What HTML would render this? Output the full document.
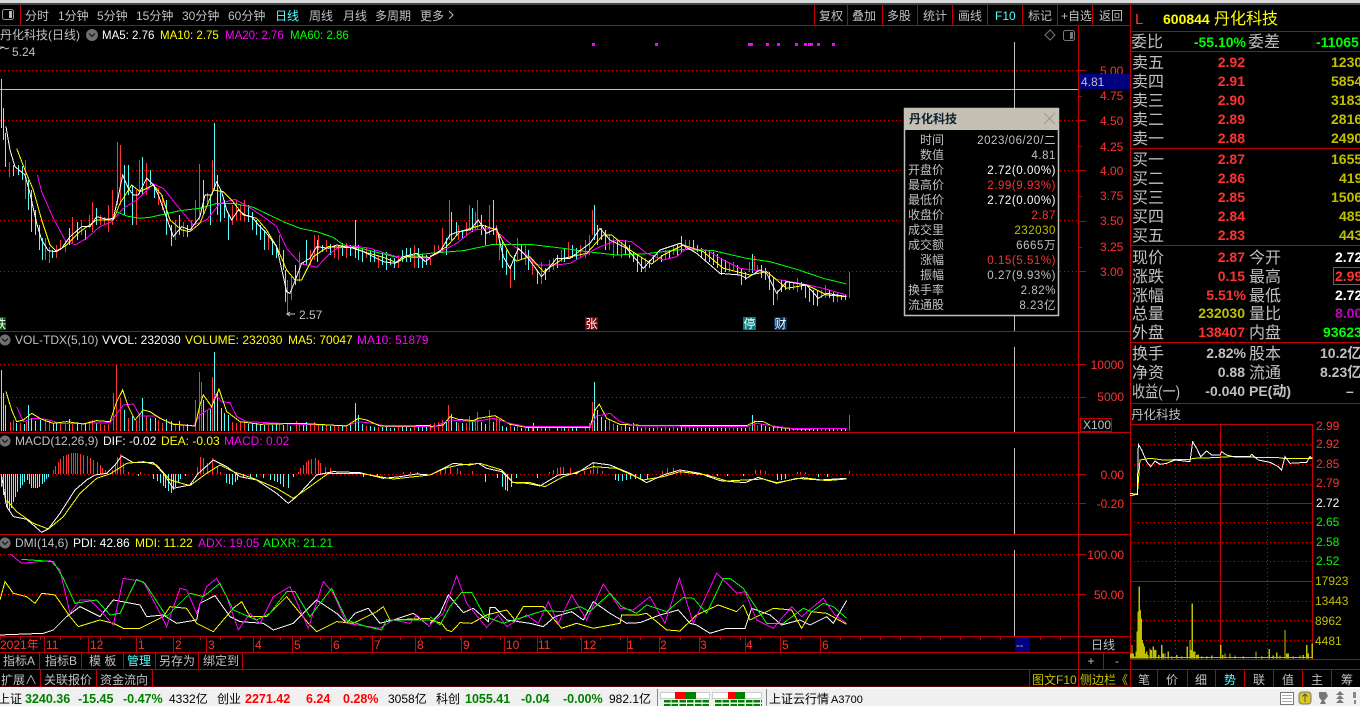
<!DOCTYPE html>
<html lang="zh"><head><meta charset="utf-8"><title>丹化科技</title>
<style>
html,body{margin:0;padding:0;background:#000;width:1360px;height:706px;overflow:hidden}
svg{display:block}
text{font-family:"Liberation Sans","WenQuanYi Zen Hei","Noto Sans CJK SC",sans-serif;font-size:12px;fill:#c0c0c0}
.y{fill:#ffff00}.w{fill:#fff}.m{fill:#ff00ff}.gr{fill:#00ff00}.c{fill:#54ffff}.r{fill:#ff3232}.dy{fill:#c0c000}
.b{font-size:16px}
.n{font-size:14px;font-weight:bold}
.p{font-size:11.5px;letter-spacing:.55px}
.k{fill:#000;font-size:12px}
.sb{font-size:12.5px;font-weight:bold}
.e{text-anchor:end}
polyline{fill:none;stroke-width:3}
.ln{shape-rendering:crispEdges}
</style></head><body>
<svg width="1360" height="706" viewBox="0 0 1360 706" xmlns="http://www.w3.org/2000/svg">
<rect width="1360" height="706" fill="#000"/>
<rect width="1360" height="4" fill="#d8d8d8"/>
<rect x="0" y="3" width="1360" height="2" fill="#444"/>

<!-- dotted grid -->
<g stroke="#e00000" stroke-dasharray="1 3" shape-rendering="crispEdges" fill="none">
<path d="M0 70.5H1078M0 120.5H1078M0 170.5H1078M0 220.5H1078M0 271.5H1078M0 364.5H1078M0 397.5H1078M0 474.5H1078M0 503.5H1078M0 594.5H1078M0 554.5H1078"/>
<path d="M1130 444.5H1312M1130 464.5H1312M1130 484.5H1312M1130 522.5H1312M1130 542.5H1312M1130 561.5H1312M1130 601.5H1312M1130 620.5H1312M1130 640.5H1312M1175.5 424V659M1267.5 424V659"/>
</g>

<!-- panel lines -->
<g stroke="#c00000" fill="none" shape-rendering="crispEdges">
<path d="M0 25.5H1130M20.5 5V25M814.5 5V25M847.5 5V25M882.5 5V25M917.5 5V25M952.5 5V25M987.5 5V25M1022.5 5V25M1057.5 5V25M1092.5 5V25"/>
<path d="M0 331.5H1130M0 432.5H1130M0 534.5H1130M0 636.5H1130M0 652.5H1130M0 669.5H1130M0 687H1130M1078.5 25V669M1103.5 652V669M1029.5 669V687M1078.5 669V687M1130.5 4V687"/>
<path d="M39.5 652V669M81.5 652V669M123.5 652V669M155.5 652V669M198.5 652V669M242.5 652V669M40.5 669V687M96.5 669V687M152.5 669V687"/>
<path d="M44.5 637V652M88.5 637V652M136.5 637V652M173.5 637V652M206.5 637V652M253.5 637V652M292.5 637V652M331.5 637V652M372.5 637V652M415.5 637V652M461.5 637V652M504.5 637V652M537.5 637V652M581.5 637V652M627.5 637V652M659.5 637V652M699.5 637V652M745.5 637V652M780.5 637V652M820.5 637V652"/>
<path d="M1130 31.5H1360M1130 51.5H1360M1130 148.5H1360M1130 245.5H1360M1130 342.5H1360M1130 403.5H1360M1130 424.5H1312M1130 503.5H1312M1130 581.5H1312M1312.5 424V659M1130 659.5H1360M1220.5 424V659M1130 669.5H1360M1157.5 669V687M1187.5 669V687M1215.5 669V687M1244.5 669V687M1273.5 669V687M1302.5 669V687M1331.5 669V687"/>
<path d="M1079 70.5H1086M1079 96.5H1082M1079 120.5H1086M1079 146.5H1082M1079 170.5H1086M1079 196.5H1082M1079 221.5H1086M1079 247.5H1082M1079 271.5H1086M1079 364.5H1086M1079 397.5H1086M1079 474.5H1086M1079 503.5H1086M1079 554.5H1086M1079 594.5H1086"/>
<path d="M0 638.5H1078" stroke-width="3" stroke-dasharray="1 19"/>
</g>

<!-- toolbar -->
<rect x="2.5" y="9.5" width="11" height="10" rx="2" fill="none" stroke="#999"/>
<rect x="9" y="11" width="3" height="7" fill="#bbb"/>
<text x="25" y="20">分时</text><text x="58" y="20">1分钟</text><text x="97" y="20">5分钟</text><text x="136" y="20">15分钟</text><text x="182" y="20">30分钟</text><text x="228" y="20">60分钟</text><text x="275" y="20" class="c">日线</text><text x="309" y="20">周线</text><text x="343" y="20">月线</text><text x="375" y="20">多周期</text><text x="420" y="20">更多</text>
<path d="M449 11l4 4-4 4" stroke="#c0c0c0" fill="none"/>
<text x="819" y="20">复权</text><text x="852" y="20">叠加</text><text x="887" y="20">多股</text><text x="923" y="20">统计</text><text x="958" y="20">画线</text><text x="995" y="20" class="c">F10</text><text x="1028" y="20">标记</text><text x="1061" y="20">+自选</text><text x="1099" y="20">返回</text>

<!-- main header -->
<text x="0" y="39">丹化科技(日线)</text>
<circle cx="92" cy="35" r="6" fill="#707070"/><path d="M89 33.5l3 3 3-3" stroke="#111" fill="none" stroke-width="1.2"/>
<text x="102" y="39" class="w" style="font-size:11.5px">MA5: 2.76</text><text x="160" y="39" class="y" style="font-size:11.5px">MA10: 2.75</text><text x="225" y="39" class="m" style="font-size:11.5px">MA20: 2.76</text><text x="290" y="39" class="gr" style="font-size:11.5px">MA60: 2.86</text>
<path d="M0 47h2M0 49l3-2 3 2 3-1" stroke="#c0c0c0" fill="none"/>
<text x="12" y="56">5.24</text>
<path d="M1050 30l5 5-5 5-5-5z" fill="none" stroke="#777"/>
<rect x="1063.5" y="30.5" width="11" height="10" rx="2" fill="none" stroke="#777"/><rect x="1070" y="32" width="3" height="7" fill="#777"/>
<path d="M592 43h3v3h-3zM655 43h3v3h-3zM748 43h5v3h-5zM766 43h3v3h-3zM777 43h3v3h-3zM795 43h3v3h-3zM804 43h3v3h-3zM808 43h5v3h-5zM817 43h3v3h-3zM832 43h3v3h-3z" fill="#ff00ff" class="ln"/>

<!-- candles -->
<path class="ln" transform="translate(.5 0)" fill="none" stroke="#ff3232" d="M9 162V177M25 160V199M45 238V260M49 247V263M56 245V258M60 240V250M65 240V252M72 217V243M81 220V235M89 215V228M92 202V232M100 215V225M104 217V225M108 205V232M112 190V225M117 142V205M120 145V205M136 190V225M139 160V195M146 163V195M158 188V205M162 195V210M175 220V240M183 222V237M191 220V230M195 200V225M199 164V220M207 193V205M212 160V190M232 205V225M236 200V220M240 205V220M244 200V222M268 235V250M279 235V255M287 280V315M291 277V300M299 252V282M310 250V265M314 235V260M318 235V250M326 240V252M334 245V258M338 245V260M346 243V258M366 247V258M378 255V268M398 255V268M414 245V268M430 255V265M434 245V255M438 245V250M442 228V253M449 200V240M458 225V240M466 222V235M469 205V230M475 212V230M477 200V230M489 205V235M496 225V245M499 235V260M510 265V288M517 238V260M525 245V265M532 260V275M541 262V284M549 260V272M553 258V270M561 250V262M568 242V258M580 245V258M585 240V258M589 235V255M592 210V235M609 235V250M613 238V258M621 243V258M645 258V272M657 252V258M665 250V260M673 245V255M685 240V250M689 240V248M729 262V272M733 262V270M749 262V272M754 256V270M757 265V272M777 290V300M793 282V290M797 278V292M821 290V298M825 285V298M837 292V302M849 272V298"/>
<path class="ln" transform="translate(.5 0)" fill="none" stroke="#54ffff" d="M1 79V128M3 108V140M5 133V167M13 165V176M18 165V175M22 166V180M28 180V210M31 190V232M35 210V235M39 225V250M42 238V260M52 250V258M69 228V245M77 222V240M85 230V240M96 208V225M124 165V215M128 165V195M132 185V225M142 157V195M150 170V185M154 185V198M166 200V235M171 225V246M179 215V235M187 225V237M203 180V215M210 195V225M214 123V190M217 175V215M220 190V222M224 200V218M228 215V240M248 205V222M252 212V230M256 220V235M260 225V240M264 230V250M272 240V255M276 245V258M283 250V270M285 270V302M295 265V285M303 262V265M306 240V265M317 240V262M322 245V252M330 244V255M342 243V256M350 245V256M355 220V258M358 245V260M362 248V262M370 250V262M374 250V262M382 252V265M386 252V270M390 258V265M394 258V268M402 250V262M406 248V262M410 248V262M418 248V268M422 254V268M426 255V265M446 238V255M451 212V240M456 222V236M462 230V238M472 208V232M481 215V235M485 225V245M493 200V235M502 240V268M506 250V275M514 255V280M521 245V260M528 250V270M537 270V284M545 268V280M557 255V268M564 248V262M572 245V258M576 248V260M594 205V240M597 225V245M601 228V240M605 230V250M617 240V255M625 240V255M629 245V258M633 252V262M637 255V272M641 258V272M649 260V268M653 255V262M661 255V262M669 250V258M677 245V256M681 236V252M693 240V250M697 245V252M701 248V258M705 250V260M709 250V262M713 252V265M717 254V268M721 258V275M725 260V272M737 265V275M741 268V285M745 272V280M752 254V273M761 265V278M765 268V280M769 272V290M773 277V305M781 280V292M785 280V290M789 281V290M801 282V290M805 285V298M809 288V302M813 290V305M817 290V306M829 290V298M833 292V302M841 295V300M845 295V300"/>
<!-- price MA lines zoom coords -->
<g transform="translate(0 120) scale(.3333)" class="ln">
<polyline stroke="#00ff00" points="350,275 380,288 420,295 450,292 540,272 600,265 650,250 700,250 760,262 850,305 900,325 950,335 1000,352 1030,375 1070,382 1150,402 1190,412 1290,400"/>
<polyline stroke="#ff00ff" points="112,165 125,215 160,295 195,360 225,375 260,355 300,320 335,305 370,265 410,240 460,192 490,205 530,255 580,315 620,300 660,250 705,238 745,260 790,290 830,320 860,385 900,430 950,442 985,405 1010,385 1060,378 1110,385 1190,410 1290,415"/>
<polyline stroke="#ffff00" points="50,85 75,150 100,210 125,300 150,375 170,395 200,375 240,335 290,300 340,300 360,250 395,195 420,215 460,195 485,225 510,300 545,330 570,335 600,310 640,210 670,215 695,240 730,285 770,295 800,330 830,380 860,450 885,480 905,480 940,410 985,380 1060,383 1100,398 1150,412 1190,428 1220,410 1290,412"/>
<polyline stroke="#ffffff" points="18,20 30,90 45,140 75,165 90,220 110,310 125,360 145,392 165,395 185,385 210,350 245,320 270,320 290,290 320,298 340,295 355,230 368,165 385,205 400,225 415,225 440,175 460,195 475,225 495,280 520,350 545,320 570,330 600,290 615,225 635,225 650,185 665,215 680,270 695,300 715,270 735,285 755,290 780,320 800,340 830,380 860,515 870,520 890,470 905,430 930,415 950,380 985,385 1010,375 1060,385 1090,395 1130,415 1150,425 1185,430 1210,410 1250,400 1275,425 1290,415"/>
</g>
<g transform="translate(430 180) scale(.3333)" class="ln">
<polyline stroke="#00ff00" points="0,220 100,212 190,193 300,193 400,205 470,215 560,225 640,222 760,208 850,212 950,235 1020,245 1100,268 1180,295 1250,312"/>
<polyline stroke="#ff00ff" points="0,232 80,190 130,150 190,145 240,190 290,225 320,255 380,255 420,250 500,205 560,180 605,185 650,220 700,240 740,230 770,205 830,210 880,240 930,265 1010,275 1040,298 1120,312 1180,325 1250,345"/>
<polyline stroke="#ffff00" points="0,230 50,200 90,155 155,135 200,150 240,225 260,243 300,230 340,275 400,235 470,220 520,165 545,165 600,210 665,252 700,225 760,195 820,215 880,265 960,285 1010,275 1070,325 1130,315 1190,345 1250,350"/>
<polyline stroke="#ffffff" points="0,230 30,215 60,165 85,155 120,150 145,120 170,160 200,145 220,230 240,265 265,205 295,235 335,290 380,235 420,235 480,190 510,145 540,180 590,205 640,265 690,210 750,190 800,220 870,280 930,285 950,295 990,270 1010,280 1040,340 1070,305 1130,315 1165,355 1190,340 1250,350"/>
</g>
<path d="M295 314H287l3-2M287 314l3 2" stroke="#c0c0c0" fill="none"/>
<text x="299" y="319">2.57</text>

<!-- signal tags -->
<rect x="0" y="317" width="6" height="13" fill="#006000"/><text x="-6" y="328" class="w">跌</text>
<rect x="585" y="317" width="13" height="13" fill="#800000"/><text x="585.5" y="328" class="w">张</text>
<rect x="743" y="317" width="13" height="13" fill="#008080"/><text x="743.5" y="328" class="w">停</text>
<rect x="774" y="317" width="13" height="13" fill="#003060"/><text x="774.5" y="328" class="w">财</text>

<!-- crosshair -->
<path class="ln" fill="none" stroke="#c0c0c0" d="M0 89.5H1078M1014.5 42V108M1014.5 316V331M1014.5 347V432M1014.5 448V534M1014.5 550V636"/>

<!-- axis labels -->
<g>
<text x="1100" y="75" class="r">5.00</text><text x="1100" y="100" class="r">4.75</text><text x="1100" y="125" class="r">4.50</text><text x="1100" y="151" class="r">4.25</text><text x="1100" y="175" class="r">4.00</text><text x="1100" y="200" class="r">3.75</text><text x="1100" y="225" class="r">3.50</text><text x="1100" y="251" class="r">3.25</text><text x="1100" y="276" class="r">3.00</text>
<text x="1124" y="369" class="r e">10000</text><text x="1124" y="401" class="r e">5000</text>
<text x="1124" y="479" class="r e">0.00</text><text x="1124" y="508" class="r e">-0.20</text>
<text x="1124" y="559" class="r e">100.00</text><text x="1124" y="599" class="r e">50.00</text>
</g>
<rect x="1079" y="74" width="51" height="15" fill="#000080"/><text x="1081" y="86">4.81</text>
<rect x="1080.5" y="418.5" width="31" height="13" fill="none" stroke="#c00000"/><text x="1083" y="429">X100</text>

<!-- volume pane -->
<circle cx="5" cy="340" r="5.5" fill="#707070"/><path d="M2 338.5l3 3 3-3" stroke="#111" fill="none"/>
<text x="15" y="344">VOL-TDX(5,10)</text><text x="102" y="344" class="w">VVOL: 232030</text><text x="185" y="344" class="y">VOLUME: 232030</text><text x="288" y="344" class="y">MA5: 70047</text><text x="357" y="344" class="m">MA10: 51879</text>
<path class="ln" transform="translate(.5 0)" fill="none" stroke="#ff3232" d="M10 431V422M13 431V420M20 431V423M26 431V422M45 431V420M49 431V421M60 431V423M65 431V424M72 431V423M81 431V424M89 431V421M92 431V420M100 431V424M104 431V425M108 431V424M113 431V393M116 431V365M120 431V398M128 431V418M136 431V420M139 431V415M146 431V416M158 431V420M162 431V423M175 431V424M183 431V425M195 431V400M199 431V372M201 431V382M207 431V410M212 431V377M232 431V422M236 431V423M240 431V422M244 431V421M268 431V425M279 431V424M287 431V424M296 431V421M299 431V424M310 431V424M314 431V422M318 431V424M326 431V425M334 431V426M338 431V425M346 431V425M366 431V426M378 431V427M398 431V427M414 431V426M430 431V424M434 431V423M438 431V422M442 431V420M448 431V405M458 431V423M466 431V423M469 431V416M475 431V420M477 431V412M489 431V410M496 431V417M499 431V419M510 431V424M517 431V424M525 431V426M532 431V427M541 431V427M549 431V427M561 431V428M568 431V427M585 431V426M589 431V423M592 431V402M609 431V420M613 431V424M621 431V426M645 431V427M657 431V427M665 431V427M673 431V427M685 431V427M689 431V426M729 431V428M733 431V428M749 431V427M754 431V420M757 431V425M777 431V427M793 431V428M797 431V428M821 431V429M825 431V429M837 431V429M849 431V415"/>
<path class="ln" transform="translate(.5 0)" fill="none" stroke="#54ffff" d="M1 431V370M3 431V393M5 431V405M16 431V423M24 431V424M28 431V405M31 431V418M35 431V421M40 431V420M53 431V424M56 431V422M69 431V419M77 431V422M85 431V424M96 431V423M124 431V410M132 431V416M142 431V398M150 431V418M155 431V418M166 431V419M171 431V421M179 431V421M187 431V424M203 431V400M210 431V409M214 431V352M217 431V393M221 431V408M224 431V413M228 431V415M248 431V424M252 431V424M256 431V423M260 431V424M264 431V425M272 431V425M276 431V424M283 431V425M290 431V426M303 431V425M306 431V422M322 431V425M330 431V426M342 431V426M350 431V425M355 431V403M358 431V415M362 431V424M370 431V426M374 431V427M382 431V427M386 431V427M390 431V428M394 431V428M402 431V427M406 431V427M410 431V428M418 431V427M422 431V427M426 431V427M446 431V420M451 431V414M456 431V422M462 431V423M472 431V421M481 431V422M485 431V424M493 431V422M502 431V426M506 431V427M514 431V427M521 431V428M528 431V427M533 431V423M537 431V428M545 431V428M557 431V428M564 431V428M572 431V428M576 431V428M594 431V382M597 431V410M601 431V417M605 431V420M617 431V425M625 431V424M629 431V427M633 431V423M637 431V427M641 431V428M649 431V428M653 431V428M661 431V428M669 431V428M677 431V428M681 431V427M693 431V428M697 431V428M701 431V428M705 431V428M709 431V428M713 431V428M717 431V428M721 431V428M725 431V428M737 431V428M741 431V428M745 431V428M752 431V415M761 431V424M765 431V426M769 431V427M773 431V427M781 431V428M785 431V428M789 431V428M801 431V429M805 431V429M809 431V429M813 431V429M817 431V429M829 431V429M833 431V429M841 431V429M845 431V429"/>
<g transform="translate(0 330) scale(.3333)" class="ln">
<polyline stroke="#ff00ff" points="50,230 70,275 100,265 140,268 180,280 250,280 330,278 370,225 400,222 420,258 470,258 510,280 580,288 600,255 635,232 645,192 665,215 690,218 710,260 740,275 900,283 1040,287 1075,275 1130,282 1160,290 1290,290"/>
<polyline stroke="#ffff00" points="18,185 35,240 50,275 70,270 95,250 125,268 160,280 200,275 250,282 290,272 330,275 350,215 368,180 385,230 405,270 430,240 450,245 480,265 520,283 585,288 600,225 610,195 635,230 657,177 680,245 720,275 780,283 900,280 1040,288 1075,265 1100,270 1140,288 1290,287"/>
</g>
<g transform="translate(430 330) scale(.3333)" class="ln">
<polyline stroke="#ffff00" points="0,290 40,285 60,260 85,268 130,272 145,265 195,257 240,283 290,292 480,292 495,240 508,223 530,265 570,283 650,287 950,287 975,275 1000,275 1030,290 1090,297 1250,295"/>
<polyline stroke="#ff00ff" points="0,295 60,270 130,275 190,265 240,280 290,290 480,290 500,258 540,250 570,275 620,288 950,290 980,280 1030,288 1090,296 1250,296"/>
</g>

<!-- MACD pane -->
<circle cx="5" cy="441" r="5.5" fill="#707070"/><path d="M2 439.5l3 3 3-3" stroke="#111" fill="none"/>
<text x="15" y="445">MACD(12,26,9)</text><text x="103" y="445" class="w">DIF: -0.02</text><text x="161" y="445" class="y">DEA: -0.03</text><text x="224" y="445" class="m">MACD: 0.02</text>
<path class="ln" transform="translate(.5 0)" fill="none" stroke="#54ffff" d="M1 474V487M3 474V495M5 474V503M7 474V508M9 474V511M11 474V508M13 474V502M15 474V497M17 474V492M20 474V488M22 474V485M24 474V482M27 474V480M29 474V484M31 474V488M33 474V488M35 474V488M37 474V488M39 474V487M42 474V484M44 474V482M46 474V479M48 474V477M138 474V476M153 474V479M157 474V481M160 474V483M163 474V486M165 474V488M168 474V491M171 474V493M173 474V490M175 474V487M178 474V482M180 474V479M185 474V476M226 474V483M229 474V484M232 474V485M235 474V482M237 474V480M243 474V477M250 474V477M256 474V477M263 474V478M270 474V480M274 474V481M277 474V482M280 474V484M283 474V487M288 474V488M293 474V477M363 474V477M370 474V476M377 474V477M485 474V482M497 474V478M502 474V487M505 474V490M507 474V491M511 474V487M516 474V478M537 474V478M615 474V480M618 474V481M622 474V481M626 474V480M630 474V479M635 474V479M640 474V479M647 474V479M697 474V475M707 474V477M717 474V476M727 474V476M743 474V476M777 474V480M781 474V480M785 474V479M818 474V477M827 474V477"/>
<path class="ln" transform="translate(.5 0)" fill="none" stroke="#ff3232" d="M53 474V470M55 474V466M58 474V462M60 474V459M63 474V456M66 474V455M68 474V454M71 474V453M73 474V453M75 474V453M77 474V453M80 474V454M83 474V455M87 474V456M90 474V458M93 474V460M97 474V462M100 474V465M102 474V468M105 474V470M107 474V472M112 474V470M115 474V465M117 474V457M120 474V454M123 474V463M128 474V472M140 474V472M197 474V467M200 474V457M203 474V458M207 474V463M212 474V458M217 474V467M220 474V472M298 474V472M300 474V468M303 474V465M306 474V462M308 474V460M311 474V459M315 474V458M318 474V460M320 474V463M325 474V467M330 474V468M337 474V472M403 474V472M410 474V472M417 474V472M433 474V473M440 474V470M445 474V468M450 474V467M457 474V468M460 474V471M472 474V471M549 474V472M553 474V470M557 474V468M560 474V467M563 474V467M570 474V468M577 474V471M584 474V471M590 474V470M593 474V463M597 474V468M602 474V471M662 474V471M667 474V468M673 474V468M680 474V470M755 474V470M760 474V470M765 474V471M797 474V472M800 474V472M805 474V472M849 474V471"/>
<g transform="translate(0 330) scale(.3333)" class="ln">
<polyline stroke="#ffffff" points="5,440 20,530 40,560 80,568 125,607 145,597 180,550 225,480 260,450 285,435 320,430 345,405 365,378 400,398 460,398 490,430 520,475 570,465 595,430 640,390 680,410 720,440 770,450 830,490 865,520 890,500 950,435 1000,425 1080,428 1150,445 1200,440 1250,432 1290,435"/>
<polyline stroke="#ffff00" points="20,510 50,545 100,580 145,597 190,560 240,490 290,445 330,432 380,400 430,395 470,405 510,450 570,467 620,430 660,405 700,425 760,445 830,475 880,505 930,470 985,430 1080,430 1180,447 1290,435"/>
</g>
<g transform="translate(430 330) scale(.3333)" class="ln">
<polyline stroke="#ffffff" points="0,435 50,410 70,400 120,405 145,400 170,415 215,425 250,458 290,460 330,468 385,435 440,430 490,398 540,405 600,430 650,458 700,435 750,420 810,430 870,452 945,458 985,442 1040,460 1100,445 1170,450 1250,445"/>
<polyline stroke="#ffff00" points="0,435 50,413 90,405 150,400 215,420 250,458 300,458 345,470 400,440 490,410 560,415 640,450 700,440 750,425 830,435 890,453 1000,447 1040,458 1120,443 1190,452 1250,447"/>
</g>

<!-- DMI pane -->
<circle cx="5" cy="543" r="5.5" fill="#707070"/><path d="M2 541.5l3 3 3-3" stroke="#111" fill="none"/>
<text x="15" y="547">DMI(14,6)</text><text x="73" y="547" class="w">PDI: 42.86</text><text x="135" y="547" class="y">MDI: 11.22</text><text x="198" y="547" class="m">ADX: 19.05</text><text x="263" y="547" class="gr">ADXR: 21.21</text>
<g transform="translate(0 330) scale(.3333)" class="ln">
<polyline stroke="#ffffff" points="0,915 130,910 160,900 200,860 240,830 300,860 340,810 420,825 440,860 490,855 530,880 590,870 600,820 645,797 690,860 720,875 790,880 820,900 880,880 950,810 1010,850 1040,880 1065,850 1105,835 1140,880 1180,870 1240,850 1290,890"/>
<polyline stroke="#ffff00" points="0,810 15,755 40,790 80,800 105,820 125,790 165,795 210,860 235,890 300,870 340,880 370,895 420,895 490,860 510,830 560,835 590,880 640,905 700,835 725,815 750,860 800,860 860,800 925,880 950,905 1010,875 1060,880 1130,845 1150,830 1170,870 1290,865"/>
<polyline stroke="#ff00ff" points="30,672 65,700 150,692 180,720 210,850 240,810 270,810 300,840 340,885 370,745 430,755 470,830 500,890 540,775 560,780 590,850 620,770 650,745 680,800 715,900 750,850 780,880 820,800 870,770 925,895 970,755 1000,790 1040,880 1140,895 1180,870 1230,880 1250,855 1290,890"/>
<polyline stroke="#00ff00" points="65,688 160,695 190,745 225,820 290,810 330,855 360,850 410,748 435,760 500,860 570,790 610,800 660,760 700,840 770,870 810,850 860,785 885,785 930,860 995,775 1040,870 1100,890 1145,900 1160,870 1290,870"/>
</g>
<g transform="translate(430 330) scale(.3333)" class="ln">
<polyline stroke="#ffffff" points="0,880 30,850 55,795 100,848 130,835 175,875 180,832 195,832 230,870 300,880 340,890 375,860 425,845 460,870 490,815 540,850 590,880 630,878 690,855 745,840 780,880 800,885 840,910 890,895 945,895 965,835 1020,855 1055,885 1110,870 1140,885 1190,860 1210,880 1250,812"/>
<polyline stroke="#ffff00" points="0,870 35,880 50,900 65,905 90,878 125,880 170,855 230,840 255,870 280,830 340,830 395,895 440,880 490,895 570,880 575,855 625,855 650,850 710,900 750,903 800,855 865,825 920,845 940,825 960,870 1030,835 1085,840 1115,895 1145,845 1190,850 1250,883"/>
<polyline stroke="#ff00ff" points="0,885 40,850 80,737 110,820 170,893 205,855 230,890 290,855 325,880 355,815 385,880 425,795 470,870 520,762 570,835 610,840 660,800 705,880 748,745 790,880 860,730 920,790 945,785 980,870 1030,895 1085,830 1115,860 1180,805 1215,855 1250,880"/>
<polyline stroke="#00ff00" points="0,860 30,885 60,830 95,787 125,787 165,860 220,880 300,855 340,842 400,845 450,830 480,845 540,790 575,830 620,850 650,825 710,845 760,803 790,805 830,850 880,745 900,745 940,775 1010,880 1060,880 1120,835 1145,845 1180,820 1210,830 1250,865"/>
</g>

<!-- date axis -->
<g>
<text x="0" y="649" class="r">2021年</text><text x="46" y="649" class="r">11</text><text x="90" y="649" class="r">12</text><text x="138" y="649" class="r">1</text><text x="175" y="649" class="r">2</text><text x="208" y="649" class="r">3</text><text x="255" y="649" class="r">4</text><text x="294" y="649" class="r">5</text><text x="333" y="649" class="r">6</text><text x="374" y="649" class="r">7</text><text x="417" y="649" class="r">8</text><text x="463" y="649" class="r">9</text><text x="506" y="649" class="r">10</text><text x="538" y="649" class="r">11</text><text x="583" y="649" class="r">12</text><text x="627" y="649" class="r">1</text><text x="660" y="649" class="r">2</text><text x="700" y="649" class="r">3</text><text x="746" y="649" class="r">4</text><text x="782" y="649" class="r">5</text><text x="822" y="649" class="r">6</text>
</g>
<rect x="1015" y="637" width="15" height="15" fill="#000080"/><text x="1016" y="649" style="font-size:11px">--</text>
<text x="1091" y="649">日线</text>
<text x="1091" y="665" style="text-anchor:middle">+</text><text x="1117" y="665" style="text-anchor:middle">-</text>

<!-- tabs -->
<text x="3" y="665">指标A</text><text x="45" y="665">指标B</text><text x="89" y="665">模 板</text><text x="127" y="665" class="c">管理</text><text x="159" y="665">另存为</text><text x="203" y="665">绑定到</text>
<text x="1" y="684">扩展∧</text><text x="44" y="684">关联报价</text><text x="100" y="684">资金流向</text>
<text x="1032" y="684" class="dy">图文F10</text><text x="1080" y="684" class="dy">侧边栏《</text>

<!-- popup -->
<rect x="904.5" y="108.5" width="154" height="207" fill="#000" stroke="#c0c0c0" stroke-width="1.5"/>
<rect x="904" y="108" width="155" height="22" fill="#c4c0b4"/>
<text x="909" y="123" style="fill:#102030;font-weight:bold">丹化科技</text>
<path d="M1044 113l11 11M1055 113l-11 11" stroke="#999" fill="none"/>
<g>
<text x="944" y="144" class="e">时间</text><text x="944" y="159" class="e">数值</text><text x="944" y="174" class="e">开盘价</text><text x="944" y="189" class="e">最高价</text><text x="944" y="204" class="e">最低价</text><text x="944" y="219" class="e">收盘价</text><text x="944" y="234" class="e">成交里</text><text x="944" y="249" class="e">成交额</text><text x="944" y="264" class="e">涨幅</text><text x="944" y="279" class="e">振幅</text><text x="944" y="294" class="e">换手率</text><text x="944" y="309" class="e">流通股</text>
<text x="1056" y="144" class="e p">2023/06/20/二</text><text x="1056" y="159" class="e p">4.81</text><text x="1056" y="174" class="e p w">2.72(0.00%)</text><text x="1056" y="189" class="e p r">2.99(9.93%)</text><text x="1056" y="204" class="e p w">2.72(0.00%)</text><text x="1056" y="219" class="e p r">2.87</text><text x="1056" y="234" class="e p dy">232030</text><text x="1056" y="249" class="e p">6665万</text><text x="1056" y="264" class="e p r">0.15(5.51%)</text><text x="1056" y="279" class="e p">0.27(9.93%)</text><text x="1056" y="294" class="e p">2.82%</text><text x="1056" y="309" class="e p">8.23亿</text>
</g>

<!-- right panel -->
<text x="1135" y="24" class="r" style="font-size:15px">L</text>
<text x="1163" y="24" class="n y">600844</text><text x="1214" y="24" class="b y">丹化科技</text>
<text x="1131" y="47" class="b">委比</text><text x="1246" y="47" class="n gr e">-55.10%</text><text x="1248" y="47" class="b">委差</text><text x="1316" y="47" class="n gr">-11065</text>
<g>
<text x="1132" y="68" class="b">卖五</text><text x="1245" y="67" class="n r e">2.92</text><text x="1331" y="67" class="n dy">1230</text>
<text x="1132" y="87" class="b">卖四</text><text x="1245" y="86" class="n r e">2.91</text><text x="1331" y="86" class="n dy">5854</text>
<text x="1132" y="106" class="b">卖三</text><text x="1245" y="105" class="n r e">2.90</text><text x="1331" y="105" class="n dy">3183</text>
<text x="1132" y="125" class="b">卖二</text><text x="1245" y="124" class="n r e">2.89</text><text x="1331" y="124" class="n dy">2816</text>
<text x="1132" y="144" class="b">卖一</text><text x="1245" y="143" class="n r e">2.88</text><text x="1331" y="143" class="n dy">2490</text>
<text x="1132" y="165" class="b">买一</text><text x="1245" y="164" class="n r e">2.87</text><text x="1331" y="164" class="n dy">1655</text>
<text x="1132" y="184" class="b">买二</text><text x="1245" y="183" class="n r e">2.86</text><text x="1339" y="183" class="n dy">419</text>
<text x="1132" y="203" class="b">买三</text><text x="1245" y="202" class="n r e">2.85</text><text x="1331" y="202" class="n dy">1506</text>
<text x="1132" y="222" class="b">买四</text><text x="1245" y="221" class="n r e">2.84</text><text x="1339" y="221" class="n dy">485</text>
<text x="1132" y="241" class="b">买五</text><text x="1245" y="240" class="n r e">2.83</text><text x="1339" y="240" class="n dy">443</text>
<text x="1132" y="263" class="b">现价</text><text x="1245" y="262" class="n r e">2.87</text><text x="1249" y="263" class="b">今开</text><text x="1335" y="262" class="n w">2.72</text>
<text x="1132" y="282" class="b">涨跌</text><text x="1245" y="281" class="n r e">0.15</text><text x="1249" y="282" class="b">最高</text><rect x="1333.5" y="267.5" width="30" height="17" fill="none" stroke="#666"/><text x="1335" y="281" class="n r">2.99</text>
<text x="1132" y="301" class="b">涨幅</text><text x="1246" y="300" class="n r e">5.51%</text><text x="1249" y="301" class="b">最低</text><text x="1335" y="300" class="n w">2.72</text>
<text x="1132" y="319" class="b">总量</text><text x="1245" y="318" class="n dy e">232030</text><text x="1249" y="319" class="b">量比</text><text x="1335" y="318" class="n" style="fill:#c000c0">8.00</text>
<text x="1132" y="338" class="b">外盘</text><text x="1245" y="337" class="n r e">138407</text><text x="1249" y="338" class="b">内盘</text><text x="1323" y="337" class="n gr">93623</text>
<text x="1132" y="359" class="b">换手</text><text x="1246" y="358" class="n e">2.82%</text><text x="1249" y="359" class="b">股本</text><text x="1320" y="358" class="n">10.2亿</text>
<text x="1132" y="378" class="b">净资</text><text x="1245" y="377" class="n e">0.88</text><text x="1249" y="378" class="b">流通</text><text x="1320" y="377" class="n">8.23亿</text>
<text x="1132" y="397" class="b" textLength="48" lengthAdjust="spacingAndGlyphs">收益(一)</text><text x="1245" y="396" class="n e">-0.040</text><text x="1249" y="396" class="n">PE(动)</text><text x="1346" y="396" class="n">–</text>
</g>
<text x="1131" y="419" style="font-size:12.5px">丹化科技</text>

<!-- intraday -->
<g transform="translate(1130 405) scale(.3333)" class="ln">
<path fill="none" stroke="#c0c000" stroke-width="4" d="M2 760V745M6 760V720M10 760V745M14 760V755M18 760V740M22 760V680M25 760V620M28 760V545M31 760V615M34 760V640M37 760V705M40 760V715M43 760V725M46 760V745M50 760V740M54 760V750M60 760V730M64 760V735M70 760V725M74 760V735M78 760V735M86 760V750M95 760V720M100 760V745M105 760V745M115 760V740M125 760V755M140 760V750M155 760V755M172 760V725M180 760V705M184 760V735M187 760V595M191 760V740M195 760V740M200 760V750M205 760V748M215 760V755M230 760V755M245 760V752M272 760V720M278 760V750M285 760V745M300 760V745M315 760V752M340 760V755M378 760V740M395 760V755M418 760V732M430 760V752M440 760V742M450 760V752M465 760V675M470 760V745M475 760V745M490 760V755M510 760V752M520 760V750M530 760V720M535 760V745M547 760V715"/>
<path fill="none" stroke="#c0c000" stroke-width="3" d="M0 757H547"/>
<polyline stroke="#ffff00" points="0,272 22,268 30,165 60,160 100,165 180,163 190,160 250,158 300,155 380,157 445,158 460,160 547,160"/>
<polyline stroke="#ffffff" points="0,265 22,268 25,118 35,135 50,170 62,185 75,168 90,178 110,175 135,165 180,170 188,110 200,130 212,155 230,138 245,150 270,150 275,140 290,150 310,155 360,155 365,148 385,165 420,172 445,185 455,195 465,155 480,175 530,172 540,155 547,160"/>
</g>
<g>
<text x="1316" y="430" class="r">2.99</text><text x="1316" y="448" class="r">2.92</text><text x="1316" y="468" class="r">2.85</text><text x="1316" y="487" class="r">2.79</text><text x="1316" y="507" class="w">2.72</text><text x="1316" y="526" class="gr">2.65</text><text x="1316" y="546" class="gr">2.58</text><text x="1316" y="565" class="gr">2.52</text>
<text x="1315" y="585" class="dy">17923</text><text x="1315" y="605" class="dy">13443</text><text x="1315" y="625" class="dy">8962</text><text x="1315" y="645" class="dy">4481</text>
</g>
<text x="1144" y="684" style="text-anchor:middle">笔</text><text x="1172" y="684" style="text-anchor:middle">价</text><text x="1201" y="684" style="text-anchor:middle">细</text><text x="1230" y="684" class="c" style="text-anchor:middle">势</text><text x="1259" y="684" style="text-anchor:middle">联</text><text x="1288" y="684" style="text-anchor:middle">值</text><text x="1317" y="684" style="text-anchor:middle">主</text><text x="1347" y="684" style="text-anchor:middle">筹</text>

<!-- status bar -->
<rect x="0" y="687" width="1360" height="1.5" fill="#fff"/>
<rect x="0" y="688.5" width="1360" height="17.5" fill="#f0f0f0"/>
<text x="-2" y="703" class="k">上证</text><text x="25" y="703" class="sb" style="fill:#008000">3240.36</text><text x="78" y="703" class="sb" style="fill:#008000">-15.45</text><text x="123" y="703" class="sb" style="fill:#008000">-0.47%</text><text x="169" y="703" class="k">4332亿</text>
<text x="217" y="703" class="k">创业</text><text x="245" y="703" class="sb" style="fill:#ff0000">2271.42</text><text x="306" y="703" class="sb" style="fill:#ff0000">6.24</text><text x="343" y="703" class="sb" style="fill:#ff0000">0.28%</text><text x="388" y="703" class="k">3058亿</text>
<text x="436" y="703" class="k">科创</text><text x="465" y="703" class="sb" style="fill:#008000">1055.41</text><text x="521" y="703" class="sb" style="fill:#008000">-0.04</text><text x="563" y="703" class="sb" style="fill:#008000">-0.00%</text><text x="609" y="703" class="k">982.1亿</text>
<path class="ln" d="M657.5 689V706M766.5 689V706" stroke="#888" fill="none"/>
<g class="ln">
<rect x="660.5" y="692.5" width="49" height="6" fill="#fff" stroke="#ccc"/><rect x="675" y="692" width="10" height="7" fill="#ff0000"/><rect x="685" y="692" width="11" height="7" fill="#008000"/>
<rect x="712.5" y="692.5" width="49" height="6" fill="#fff" stroke="#ccc"/><rect x="728" y="692" width="8" height="7" fill="#ff0000"/><rect x="736" y="692" width="9" height="7" fill="#008000"/>
<path d="M664 701H710M715 701H762M664 705H710M715 705H762" stroke="#008000" stroke-width="2.5" stroke-dasharray="6.5 1.2" fill="none"/>
</g>
<text x="769" y="703" class="k">上证云行情</text><text x="831" y="703" class="k" style="font-size:11px">A3700</text>
<!-- tray icons -->
<rect x="1280.5" y="692.5" width="13" height="12" fill="#fff" stroke="#777"/><path class="ln" d="M1282 695.5H1292M1282 698.5H1292M1282 701.5H1292" stroke="#aaa"/>
<rect x="1299" y="692" width="12" height="12" rx="3" fill="#d8c820" stroke="#777"/><path d="M1305 694v8M1302.5 696.5l2.5-2.5 2.5 2.5" stroke="#554" fill="none"/>
<path d="M1319 692h7l2 4-3 4h-4l-2-3zM1322 700l-2 4h6l-2-4z" fill="#777"/>
<path d="M1340 691l4 4h-8zM1340 695l4 4h-8zM1340 699l4 4h-8z" fill="#777"/>
<path d="M1353 692h3v6h-3zM1354 700h2v4h-2z" fill="#888"/>
</svg>
</body></html>
